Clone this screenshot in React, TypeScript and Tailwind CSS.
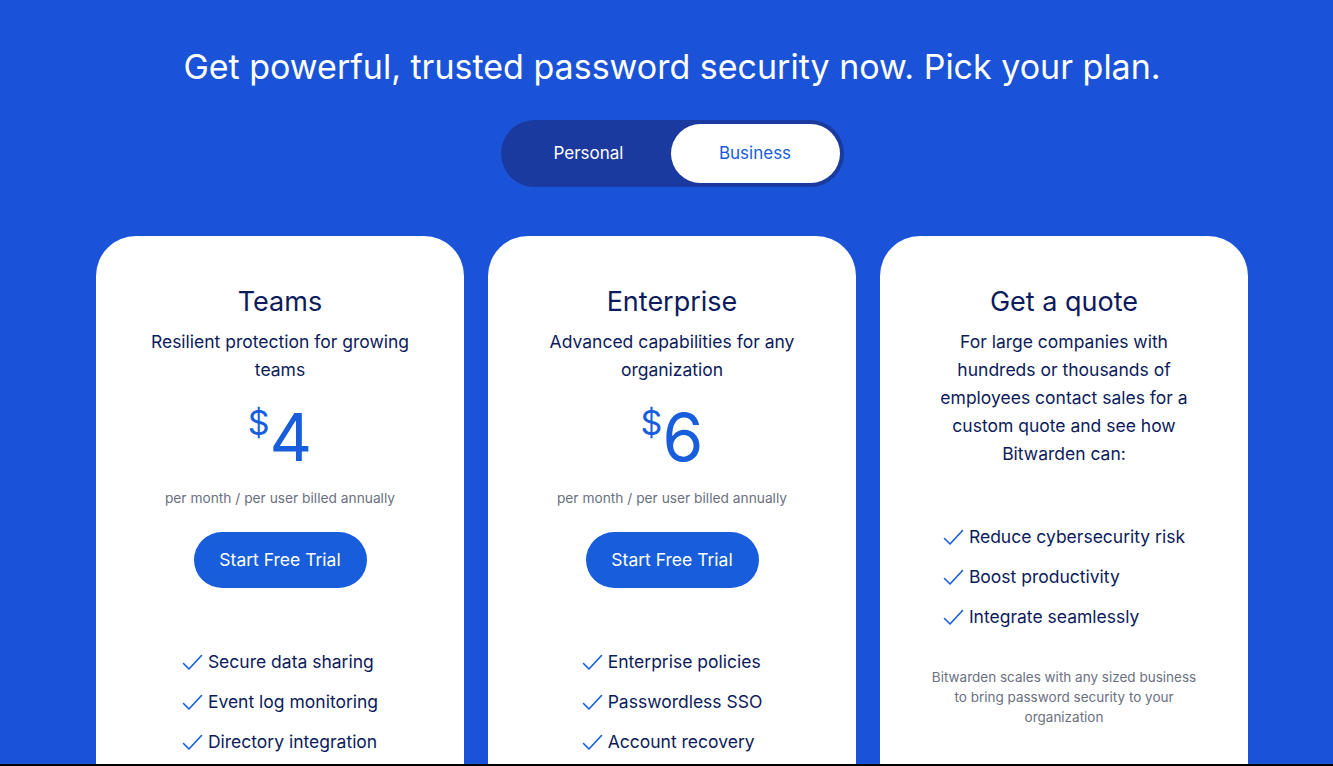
import React from "react";

const font = { fontFamily: "Inter, 'Noto Sans', sans-serif" };

function Check() {
  return (
    <svg width="21" height="17" viewBox="0 0 21 17" fill="none" className="shrink-0">
      <path d="M1.5 9.5 L7 15 L19.5 1.5" stroke="#175ddc" strokeWidth="1.6" strokeLinecap="round" strokeLinejoin="round" />
    </svg>
  );
}

function Features({ items }: { items: string[] }) {
  return (
    <ul className="flex flex-col gap-[12px] items-start mx-auto">
      {items.map((f) => (
        <li key={f} className="flex items-center gap-[5px] text-[17.5px] leading-[28px] text-[#0c1b5b]">
          <Check />
          {f}
        </li>
      ))}
    </ul>
  );
}

function PlanCard({ title, subtitle, price, features }: { title: string; subtitle: React.ReactNode; price: string; features: string[] }) {
  return (
    <div className="w-[368px] shrink-0 bg-white rounded-t-[40px] flex flex-col items-center pt-[48px] px-[40px] pb-10">
      <h2 className="text-[27px] leading-[36px] text-[#0c1b5b]">{title}</h2>
      <p className="mt-[8px] text-[17.5px] leading-[28px] text-[#0c1b5b] text-center">{subtitle}</p>
      <div className="mt-[21px] flex items-start text-[#175ddc]">
        <span className="text-[34px] leading-[34px] mt-[1px]">$</span>
        <span className="text-[66px] leading-[64px]">{price}</span>
      </div>
      <p className="mt-[19px] text-[13.75px] leading-[20px] text-[#6b7081]">per month / per user billed annually</p>
      <button className="mt-[24px] h-[56px] w-[173px] rounded-full bg-[#175ddc] text-white text-[17.5px]">Start Free Trial</button>
      <div className="mt-[60px]">
        <Features items={features} />
      </div>
    </div>
  );
}

export default function App() {
  return (
    <div style={font} className="h-[766px] overflow-hidden bg-[#1a53d8] border-b-2 border-black flex flex-col items-center pl-[11px]">
      <h1 className="shrink-0 mt-[45px] text-[34px] leading-[44px] text-white">
        Get powerful, trusted password security now. Pick your plan.
      </h1>
      <div className="shrink-0 mt-[31px] flex items-center h-[67px] w-[343px] rounded-full bg-[#1b3a9f] p-[4px]">
        <button className="flex-1 h-[59px] rounded-full text-white text-[17px] pl-[2px]">Personal</button>
        <button className="w-[169px] h-[59px] rounded-full bg-white text-[#175ddc] text-[17px]">Business</button>
      </div>
      <div className="shrink-0 mt-[49px] flex gap-[24px]">
        <PlanCard
          title="Teams"
          subtitle={<>Resilient protection for growing<br />teams</>}
          price="4"
          features={["Secure data sharing", "Event log monitoring", "Directory integration"]}
        />
        <PlanCard
          title="Enterprise"
          subtitle={<>Advanced capabilities for any<br />organization</>}
          price="6"
          features={["Enterprise policies", "Passwordless SSO", "Account recovery"]}
        />
        <div className="w-[368px] shrink-0 bg-white rounded-t-[40px] flex flex-col items-center pt-[48px] px-[40px] pb-10">
          <h2 className="text-[27px] leading-[36px] text-[#0c1b5b]">Get a quote</h2>
          <p className="mt-[8px] text-[17.5px] leading-[28px] text-[#0c1b5b] text-center">
            For large companies with<br />hundreds or thousands of<br />employees contact sales for a<br />custom quote and see how<br />Bitwarden can:
          </p>
          <div className="mt-[55px]">
            <Features items={["Reduce cybersecurity risk", "Boost productivity", "Integrate seamlessly"]} />
          </div>
          <p className="mt-[36px] text-[13.5px] leading-[20px] text-[#6b7081] text-center">
            Bitwarden scales with any sized business<br />to bring password security to your<br />organization
          </p>
        </div>
      </div>
    </div>
  );
}
